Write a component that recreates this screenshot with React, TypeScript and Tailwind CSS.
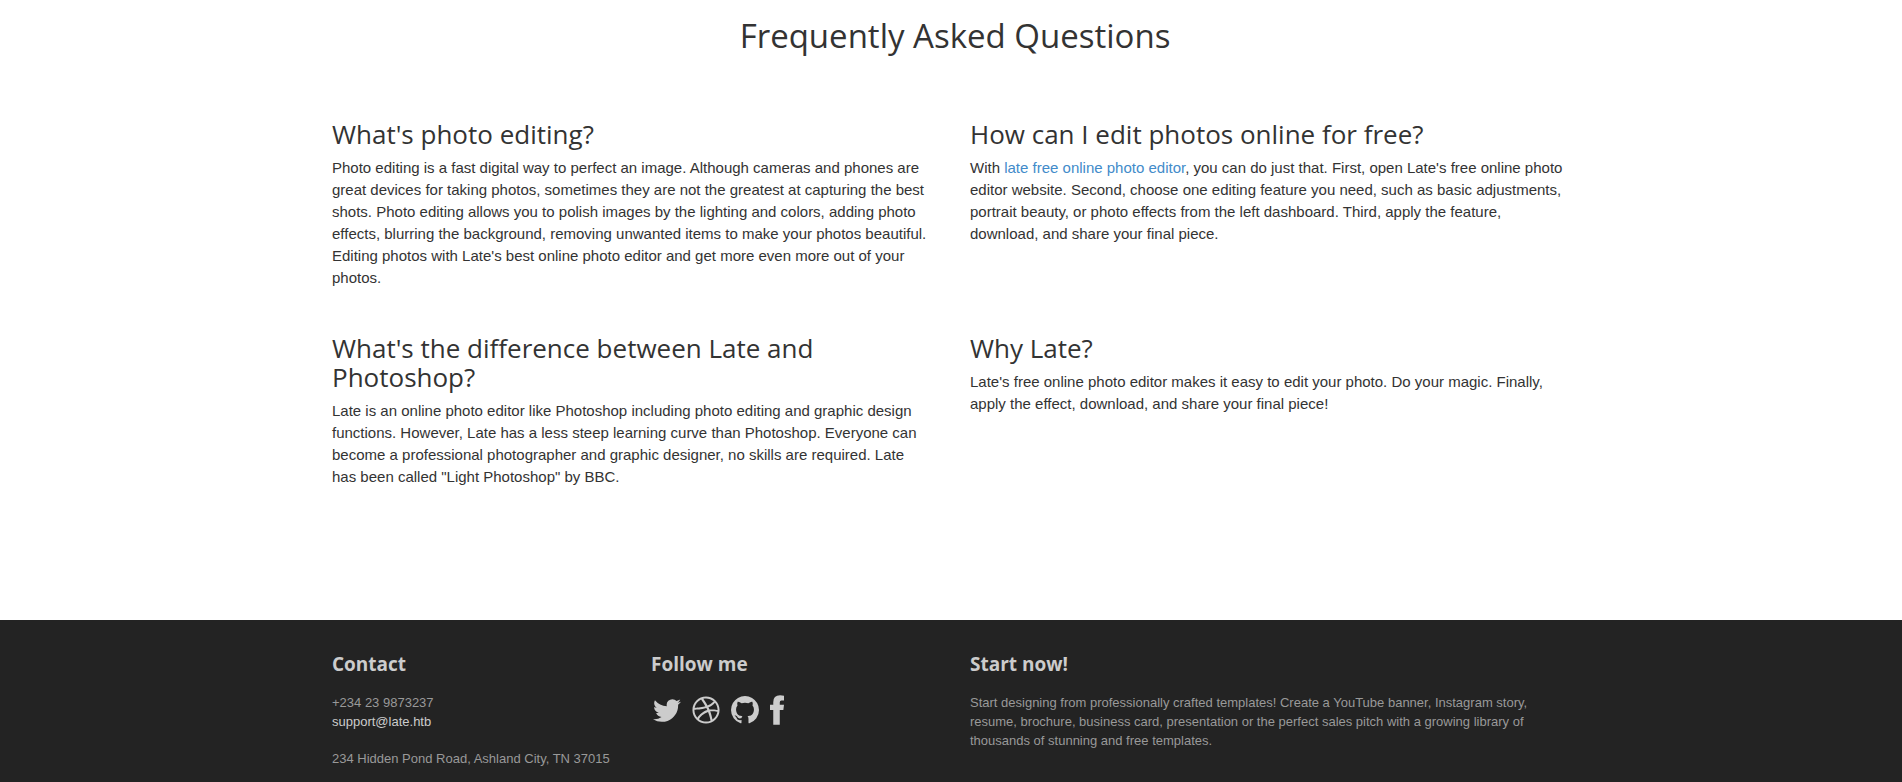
import React from "react";
import { FaDribbble } from "react-icons/fa";

const questions: { title: string; body: React.ReactNode }[] = [
  {
    title: "What's photo editing?",
    body: "Photo editing is a fast digital way to perfect an image. Although cameras and phones are great devices for taking photos, sometimes they are not the greatest at capturing the best shots. Photo editing allows you to polish images by the lighting and colors, adding photo effects, blurring the background, removing unwanted items to make your photos beautiful. Editing photos with Late's best online photo editor and get more even more out of your photos.",
  },
  {
    title: "How can I edit photos online for free?",
    body: (
      <>
        With <a href="#editor" className="text-[#428bca]">late free online photo editor</a>, you can do just that. First, open Late's free online photo editor website. Second, choose one editing feature you need, such as basic adjustments, portrait beauty, or photo effects from the left dashboard. Third, apply the feature, download, and share your final piece.
      </>
    ),
  },
  {
    title: "What's the difference between Late and Photoshop?",
    body: 'Late is an online photo editor like Photoshop including photo editing and graphic design functions. However, Late has a less steep learning curve than Photoshop. Everyone can become a professional photographer and graphic designer, no skills are required. Late has been called "Light Photoshop" by BBC.',
  },
  {
    title: "Why Late?",
    body: "Late's free online photo editor makes it easy to edit your photo. Do your magic. Finally, apply the effect, download, and share your final piece!",
  },
];

function TwitterIcon() {
  return (
    <svg viewBox="108 256 1576 1280" width="28" height="23" fill="currentColor" aria-hidden="true">
      <path d="M1684 408q-67 98-162 167 1 14 1 42 0 130-38 259.500t-115.500 248.500-184.500 210.500-258 146-323 54.500q-271 0-496-145 35 4 78 4 225 0 401-138-105-2-188-64.500t-114-159.500q33 5 61 5 43 0 85-11-112-23-185.500-111.500t-73.500-205.500v-4q68 38 146 41-66-44-105-115t-39-154q0-88 44-163 121 149 294.500 238.500t371.500 99.500q-8-38-8-74 0-134 94.500-228.500t228.500-94.500q140 0 236 102 109-21 205-78-37 115-142 178 93-10 186-50z" />
    </svg>
  );
}

function GithubIcon() {
  return (
    <svg viewBox="128 128 1536 1536" width="28" height="28" fill="currentColor" aria-hidden="true">
      <path d="M896 128q209 0 385.500 103t279.500 279.500 103 385.500q0 251-146.500 451.500t-378.500 277.500q-27 5-40-7t-13-30q0-3 .5-76.500t.5-134.500q0-97-52-142 57-6 102.500-18t94-39 81-66.500 53-105 20.500-150.500q0-119-79-206 37-91-8-204-28-9-81 11t-92 44l-38 24q-93-26-192-26t-192 26q-16-11-42.500-27t-83.500-38.500-85-13.500q-45 113-8 204-79 87-79 206 0 85 20.500 150t52.500 105 80.500 67 94 39 102.500 18q-39 36-49 103-21 10-45 15t-57 5-65.500-21.500-55.500-62.500q-19-32-48.500-52t-49.500-24l-20-3q-21 0-29 4.500t-5 11.500 9 14 13 12l7 5q22 10 43.500 38t31.500 51l10 23q13 38 44 61.500t67 30 69.500 7 55.500-3.500l23-4q0 38 .5 88.500t.5 54.500q0 18-13 30t-40 7q-232-77-378.500-277.500t-146.500-451.500q0-209 103-385.500t279.500-279.500 385.500-103z" />
    </svg>
  );
}

function FacebookIcon() {
  return (
    <svg viewBox="0 0 43 90" width="14" height="30" fill="currentColor" aria-hidden="true">
      <path d="M43 1V16H35Q30 16 30 22V29H43L41 45H30V90H10V45H0V29H10V21Q10 0 31 0Z" />
    </svg>
  );
}

const socials = [
  { label: "Twitter", icon: <TwitterIcon /> },
  { label: "Dribbble", icon: <FaDribbble size={28} /> },
  { label: "GitHub", icon: <GithubIcon /> },
  { label: "Facebook", icon: <FacebookIcon /> },
];

function FooterTitle({ children }: { children: React.ReactNode }) {
  return <h3 className="mb-[19px] font-['Open_Sans',sans-serif] text-[19px] leading-5 font-bold text-[#ccc]">{children}</h3>;
}

export default function App() {
  return (
    <div className="bg-white font-['Liberation_Sans',sans-serif] text-[15px] leading-[22px] text-[#333]">
      <main className="pl-2">
        <div className="mx-auto max-w-[1276px] px-[15px] pt-4 pb-[132px]">
          <h2 className="text-center font-['Open_Sans',sans-serif] text-[33px] leading-10">Frequently Asked Questions</h2>
          <div className="mt-16 grid grid-cols-2 gap-x-[30px] gap-y-[45px]">
            {questions.map((q) => (
              <section key={q.title}>
                <h3 className="mb-2 font-['Open_Sans',sans-serif] text-[26px] leading-[29px]">{q.title}</h3>
                <p className="pr-3">{q.body}</p>
              </section>
            ))}
          </div>
        </div>
      </main>
      <footer className="bg-[#232323] pl-2 text-[13px] leading-[19px] text-[#999]">
        <div className="mx-auto grid max-w-[1276px] grid-cols-4 gap-x-[30px] px-[15px] pt-[34px] pb-[14px]">
          <section>
            <FooterTitle>Contact</FooterTitle>
            <p>+234 23 9873237</p>
            <a href="mailto:support@late.htb" className="block text-[#ccc]">support@late.htb</a>
            <address className="mt-[18px] whitespace-nowrap not-italic">234 Hidden Pond Road, Ashland City, TN 37015</address>
          </section>
          <section>
            <FooterTitle>Follow me</FooterTitle>
            <div className="flex items-center gap-[11px] pt-0.5 pl-0.5 text-[#ccc]">
              {socials.map(({ label, icon }) => (
                <a key={label} href={"#" + label.toLowerCase()} aria-label={label}>
                  {icon}
                </a>
              ))}
            </div>
          </section>
          <section className="col-span-2">
            <FooterTitle>Start now!</FooterTitle>
            <p className="pr-8">
              Start designing from professionally crafted templates! Create a YouTube banner, Instagram story, resume, brochure, business card, presentation or the perfect sales pitch with a growing library of thousands of stunning and free templates.
            </p>
          </section>
        </div>
      </footer>
    </div>
  );
}
